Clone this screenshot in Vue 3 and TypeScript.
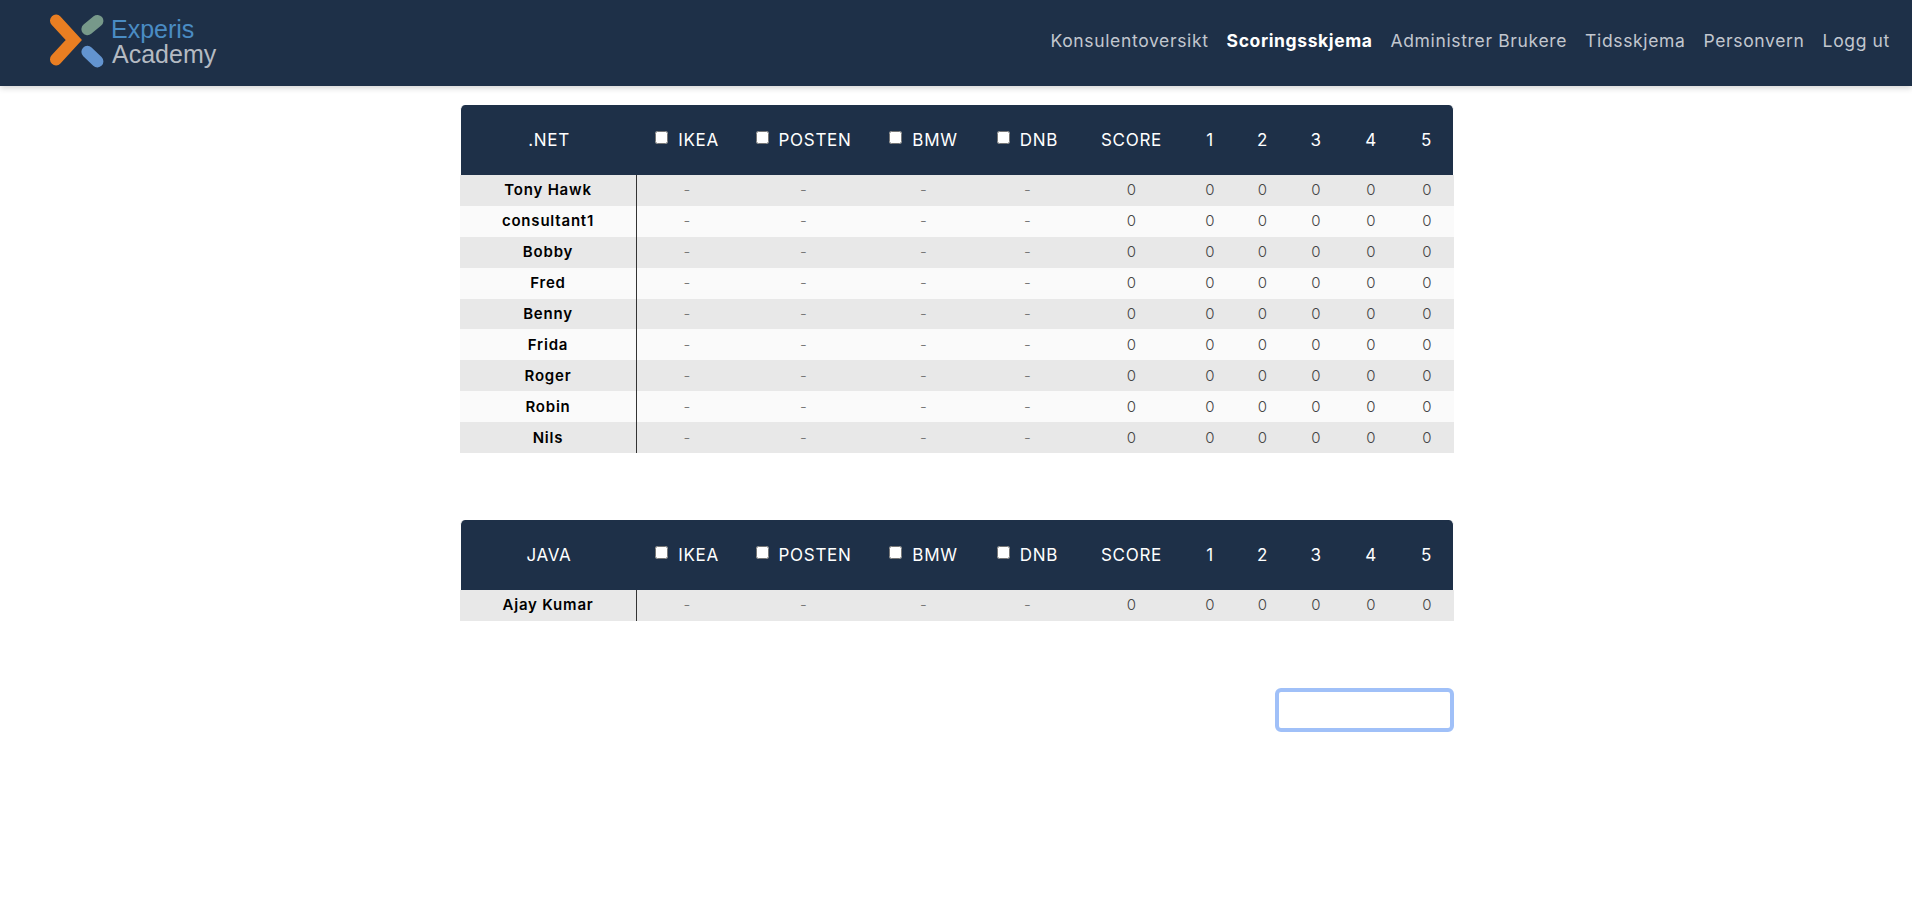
<script setup lang="ts">
interface Group {
  title: string
  people: string[]
}

const navItems: string[] = ['Konsulentoversikt', 'Scoringsskjema', 'Administrer Brukere', 'Tidsskjema', 'Personvern', 'Logg ut']
const clients: string[] = ['IKEA', 'POSTEN', 'BMW', 'DNB']
const scores: string[] = ['1', '2', '3', '4', '5']
const groups: Group[] = [
  { title: '.NET', people: ['Tony Hawk', 'consultant1', 'Bobby', 'Fred', 'Benny', 'Frida', 'Roger', 'Robin', 'Nils'] },
  { title: 'JAVA', people: ['Ajay Kumar'] },
]
</script>

<template>
  <header class="nav">
    <div class="brand">
      <svg class="mark" width="54" height="54" viewBox="0 0 54 54" aria-hidden="true">
        <path d="M6 6.6 L23.8 26 L6 45.4" fill="none" stroke="#e97e22" stroke-width="12" stroke-linecap="round" stroke-linejoin="miter" />
        <path d="M37.4 15.2 L47.4 6.9" fill="none" stroke="#77998a" stroke-width="12" stroke-linecap="round" />
        <path d="M37.4 37.8 L47.4 47.4" fill="none" stroke="#6394d0" stroke-width="12" stroke-linecap="round" />
      </svg>
      <div class="wordmark">
        <span class="word-top">Experis</span>
        <span class="word-bottom">Academy</span>
      </div>
    </div>
    <nav class="links">
      <a v-for="item in navItems" :key="item" class="link" :class="{ active: item === 'Scoringsskjema' }">{{ item }}</a>
    </nav>
  </header>

  <main class="page">
    <div class="content">
      <table v-for="group in groups" :key="group.title" class="score-table">
        <thead>
          <tr>
            <th>{{ group.title }}</th>
            <th v-for="client in clients" :key="client">
              <input class="check" type="checkbox" />
              <span>{{ client }}</span>
            </th>
            <th>SCORE</th>
            <th v-for="n in scores" :key="n">{{ n }}</th>
          </tr>
        </thead>
        <tbody>
          <tr v-for="person in group.people" :key="person">
            <td class="name">{{ person }}</td>
            <td v-for="client in clients" :key="client" class="dash">-</td>
            <td class="num">0</td>
            <td v-for="n in scores" :key="n" class="num">0</td>
          </tr>
        </tbody>
      </table>
      <div class="actions">
        <button class="save" type="button"></button>
      </div>
    </div>
  </main>
</template>

<style>
html, body { margin: 0; background: #fff; }
</style>

<style scoped>
.nav {
  height: 86px;
  box-sizing: border-box;
  background: #1e3048;
  box-shadow: 0 2px 6px rgba(0, 0, 0, 0.18);
  display: flex;
  align-items: center;
  justify-content: space-between;
  padding: 0 22px 0 50px;
  font-family: Inter, "Liberation Sans", sans-serif;
}
.brand { display: flex; align-items: center; gap: 7px; margin-top: -4px; }
.mark { display: block; }
.wordmark {
  display: flex;
  flex-direction: column;
  font-family: "Liberation Sans", Arial, sans-serif;
  font-size: 25px;
  line-height: 25px;
  margin-top: 2px;
}
.word-top { color: #4a8cc4; }
.word-bottom { color: #b4bac2; margin-left: 1px; }
.links { display: flex; gap: 18px; margin-top: -4px; }
.link {
  color: #c2c7cf;
  font-size: 17.5px;
  font-weight: 400;
  letter-spacing: 0.65px;
  line-height: 20px;
  white-space: nowrap;
}
.link.active { color: #fff; font-weight: 700; letter-spacing: 0.6px; }
.page {
  display: flex;
  justify-content: center;
  padding: 19px 0 0 2px;
  font-family: Inter, "Liberation Sans", sans-serif;
}
.content { width: 994px; }
.score-table {
  width: 994px;
  table-layout: fixed;
  border-collapse: separate;
  border-spacing: 0;
  margin-bottom: 67px;
}
th {
  height: 70px;
  padding: 0;
  background: #1e3048;
  color: #fff;
  font-size: 17px;
  font-weight: 400;
  letter-spacing: 0.7px;
  text-align: center;
  white-space: nowrap;
}
th:first-child { width: 176px; border-left: 1px solid #fff; border-top-left-radius: 5px; }
th:nth-child(2) { width: 100px; }
th:nth-child(3) { width: 133px; }
th:nth-child(4) { width: 107px; }
th:nth-child(5) { width: 101px; }
th:nth-child(6) { width: 107px; }
th:nth-child(7) { width: 50px; }
th:nth-child(8) { width: 55px; }
th:nth-child(9) { width: 52px; }
th:nth-child(10) { width: 58px; }
th:last-child { border-right: 1px solid #fff; border-top-right-radius: 5px; }
.check { width: 13px; height: 13px; margin: 0 10px 0 0; vertical-align: 2px; }
td {
  height: 30.9px;
  padding: 0 0 1px;
  box-sizing: border-box;
  text-align: center;
  background: #fafafa;
  color: #444;
  font-size: 15px;
  font-weight: 300;
}
tbody tr:nth-child(odd) td { background: #e8e8e8; }
td.name {
  color: #000;
  font-weight: 600;
  letter-spacing: 0.8px;
  border-right: 1px solid #333;
}
td.dash { color: #777; }
.actions { display: flex; justify-content: flex-end; }
.save {
  width: 179px;
  height: 44px;
  box-sizing: border-box;
  background: #fff;
  border: 4px solid #a0c0f8;
  border-radius: 6px;
  padding: 0;
}
</style>
